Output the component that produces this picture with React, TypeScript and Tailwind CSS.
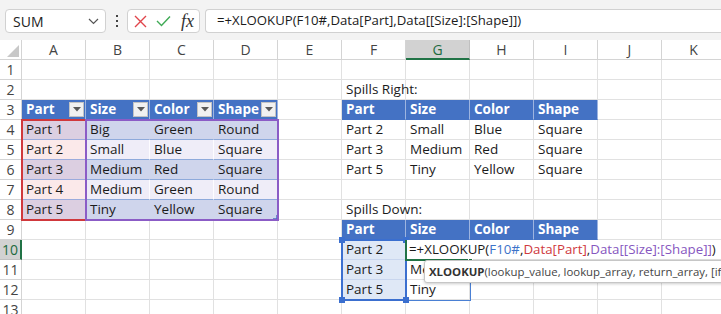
import React from 'react'

type Kind = 'plain' | 'head' | 'redA' | 'redB' | 'purA' | 'purB' | 'blueF'

interface CellData {
  t?: string
  k?: Kind
  filter?: boolean
}

const KIND: Record<Kind, string> = {
  plain: 'bg-transparent border-r border-b border-[#e1e1e1] text-[#1b1b1b]',
  head: 'bg-[#4472c4] text-white font-bold border-r border-b border-r-[#9db4e0] border-b-[#4472c4]',
  redA: 'bg-[#dccfe1] border-r border-b border-r-[#dccfe1] border-b-[#9babdc] text-[#1b1b1b]',
  redB: 'bg-[#fbe9ea] border-r border-b border-r-[#fbe9ea] border-b-[#9babdc] text-[#1b1b1b]',
  purA: 'bg-[#cfd5ec] border-r border-b border-r-[#cfd5ec] border-b-[#8eaadb] text-[#1b1b1b]',
  purB: 'bg-[#efedf8] border-r border-b border-r-[#fdfcff] border-b-[#8eaadb] text-[#1b1b1b]',
  blueF: 'bg-[#dfe8f6] border-r border-b border-[#c9d6ee] text-[#1b1b1b]',
}

const COLS = ['A', 'B', 'C', 'D', 'E', 'F', 'G', 'H', 'I', 'J', 'K']
const ROWS = [1, 2, 3, 4, 5, 6, 7, 8, 9, 10, 11, 12, 13]

const parts = [
  ['Part 1', 'Big', 'Green', 'Round'],
  ['Part 2', 'Small', 'Blue', 'Square'],
  ['Part 3', 'Medium', 'Red', 'Square'],
  ['Part 4', 'Medium', 'Green', 'Round'],
  ['Part 5', 'Tiny', 'Yellow', 'Square'],
]
const headers = ['Part', 'Size', 'Color', 'Shape']

const cells: Record<string, CellData> = {}

headers.forEach((h, i) => {
  cells[COLS[i] + '3'] = { t: h, k: 'head', filter: true }
  cells[COLS[i + 5] + '3'] = { t: h, k: 'head' }
  cells[COLS[i + 5] + '9'] = { t: h, k: 'head' }
})

parts.forEach((row, r) => {
  const odd = r % 2 === 0
  row.forEach((v, c) => {
    const k: Kind = c === 0 ? (odd ? 'redA' : 'redB') : odd ? 'purA' : 'purB'
    cells[COLS[c] + (r + 4)] = { t: v, k }
  })
})

const spilled = [parts[1], parts[2], parts[4]]
spilled.forEach((row, r) => {
  row.forEach((v, c) => {
    cells[COLS[c + 5] + (r + 4)] = { t: v }
  })
  cells['F' + (r + 10)] = { t: row[0], k: 'blueF' }
})
cells['F2'] = { t: 'Spills Right:' }
cells['F8'] = { t: 'Spills Down:' }
// the rest of "Medium" sits under the tooltip
cells['G11'] = { t: 'Me' }
cells['G12'] = { t: 'Tiny' }

const FilterButton = () => (
  <span className="w-[15px] h-[15px] mr-[1px] bg-[#f1f1f1] border border-[#c3c3c3] flex items-center justify-center shrink-0">
    <svg width="8" height="5" viewBox="0 0 8 5">
      <path d="M0 0 L8 0 L4 4.5 Z" fill="#595959" />
    </svg>
  </span>
)

const Cell = ({ id }: { id: string }) => {
  const d = cells[id] || {}
  return (
    <div
      className={`${KIND[d.k || 'plain']} flex items-center justify-between pl-[4px] overflow-visible whitespace-nowrap`}
    >
      <span>{d.t}</span>
      {d.filter && <FilterButton />}
    </div>
  )
}

const Handle = ({ x, y, color }: { x: string; y: string; color: string }) => (
  <div className={`absolute w-[6px] h-[6px] ${x} ${y} ${color}`} />
)

export default function App() {
  return (
    <div className="w-[721px] h-[314px] overflow-hidden bg-white font-['Open_Sans',sans-serif] text-[13.5px]">
      {/* formula bar */}
      <div className="h-[40px] bg-[#f3f3f3] flex items-start pt-[9px] pl-[5px]">
        <div className="w-[101px] h-[24px] bg-white border border-[#d1d1d1] rounded-[4px] flex items-center justify-between pl-[7px] pr-[6px] text-[14px] text-[#222]">
          <span>SUM</span>
          <svg width="11" height="7" viewBox="0 0 11 7">
            <path d="M1 1 L5.5 5.5 L10 1" stroke="#555" strokeWidth="1.2" fill="none" />
          </svg>
        </div>
        <div className="w-[21px] h-[24px] flex flex-col items-center justify-center gap-[3px]">
          <span className="w-[2px] h-[2px] bg-[#444]" />
          <span className="w-[2px] h-[2px] bg-[#444]" />
          <span className="w-[2px] h-[2px] bg-[#444]" />
        </div>
        <div className="w-[73px] h-[24px] bg-white border border-[#d1d1d1] rounded-[4px] flex items-center pl-[6px] gap-[9px]">
          <svg width="13" height="13" viewBox="0 0 13 13">
            <path d="M1 1 L12 12 M12 1 L1 12" stroke="#e0454b" strokeWidth="1.4" />
          </svg>
          <svg width="15" height="12" viewBox="0 0 15 12">
            <path d="M1 6 L5.5 10.5 L14 1.5" stroke="#3faa55" strokeWidth="1.4" fill="none" />
          </svg>
          <span className="font-['Liberation_Serif',serif] italic text-[18px] text-[#333] leading-none ml-[1px]">fx</span>
        </div>
        <div className="ml-[5px] flex-1 h-[24px] bg-white border border-r-0 border-[#d1d1d1] rounded-l-[4px] flex items-center pl-[11px] text-[13.2px] text-[#1b1b1b] whitespace-nowrap">
          =+XLOOKUP(F10#,Data[Part],Data[[Size]:[Shape]])
        </div>
      </div>

      {/* sheet */}
      <div className="relative">
        <div className="grid grid-cols-[22px_repeat(11,64px)] auto-rows-[20px]">
          <div className="bg-white border-r border-b border-[#d4d4d4] flex items-end justify-end p-[2px]">
            <svg width="12" height="12" viewBox="0 0 12 12">
              <path d="M12 0 L12 12 L0 12 Z" fill="#c8c8c8" />
            </svg>
          </div>
          {COLS.map(c =>
            c === 'G' ? (
              <div key={c} className="bg-[#d2d2d2] border-r border-[#c0c0c0] border-b-2 border-b-[#217346] flex items-center justify-center text-[14px] text-[#1d6a3f]">
                {c}
              </div>
            ) : (
              <div key={c} className="bg-white border-r border-b border-[#d4d4d4] flex items-center justify-center text-[14px] text-[#444]">
                {c}
              </div>
            )
          )}
          {ROWS.map(r => (
            <React.Fragment key={r}>
              {r === 10 ? (
                <div className="bg-[#d2d2d2] border-b border-[#c0c0c0] border-r-2 border-r-[#217346] flex items-center justify-center text-[14px] text-[#1d6a3f]">
                  {r}
                </div>
              ) : (
                <div className="bg-white border-r border-b border-[#d4d4d4] flex items-center justify-center text-[14px] text-[#444]">
                  {r}
                </div>
              )}
              {COLS.map(c => (
                <Cell key={c + r} id={c + r} />
              ))}
            </React.Fragment>
          ))}
        </div>

        {/* reference highlights */}
        <div className="absolute left-[21px] top-[79px] w-[66px] h-[102px] border-2 border-[#d0383c]" />
        <div className="absolute left-[85px] top-[79px] w-[194px] h-[102px] border-2 border-[#8b5cc6]" />
        <svg className="absolute left-[273px] top-[175px]" width="4" height="4" viewBox="0 0 4 4">
          <path d="M4 0 L4 4 L0 4" stroke="#4b6fc0" strokeWidth="1.5" fill="none" />
        </svg>

        {/* spill border of G10 */}
        <div className="absolute left-[406px] top-[200px] w-[65px] h-[61px] border border-[#4a80d4]" />

        {/* F10# reference */}
        <div className="absolute left-[341px] top-[199px] w-[66px] h-[62px] border-2 border-[#3b6fcf]" />
        <Handle x="left-[339px]" y="top-[197px]" color="bg-[#3b6fcf]" />
        <Handle x="left-[403px]" y="top-[197px]" color="bg-[#3b6fcf]" />
        <Handle x="left-[339px]" y="top-[257px]" color="bg-[#3b6fcf]" />
        <Handle x="left-[403px]" y="top-[257px]" color="bg-[#3b6fcf]" />

        {/* cell being edited */}
        <div className="absolute left-[407px] top-[200px] right-0 h-[19px] bg-white flex items-center pl-[2px] text-[13.3px] text-[#1b1b1b] whitespace-nowrap">
          <span>=+XLOOKUP(</span>
          <span className="text-[#3d73c9]">F10#</span>
          <span>,</span>
          <span className="text-[#cf3a3e]">Data[Part]</span>
          <span>,</span>
          <span className="text-[#8656c0]">Data[[Size]:[Shape]]</span>
          <span>)</span>
        </div>
        <div className="absolute left-[405px] top-[200px] w-[66px] h-[21px] border-l-2 border-b-2 border-[#217346]" />
        <div className="absolute left-[468px] top-[218px] w-[5px] h-[5px] bg-[#217346] border border-white" />

        {/* tooltip */}
        <div className="absolute left-[424px] top-[220px] w-[330px] h-[23px] bg-white border border-[#c6c6c6] rounded-[3px] shadow-[0_1px_3px_rgba(0,0,0,0.2)] flex items-center pl-[4px] text-[11.4px] text-[#444] whitespace-nowrap">
          <span className="font-bold text-[#333]">XLOOKUP</span>
          <span>(lookup_value, lookup_array, return_array, [if_not_found])</span>
        </div>
      </div>
    </div>
  )
}
